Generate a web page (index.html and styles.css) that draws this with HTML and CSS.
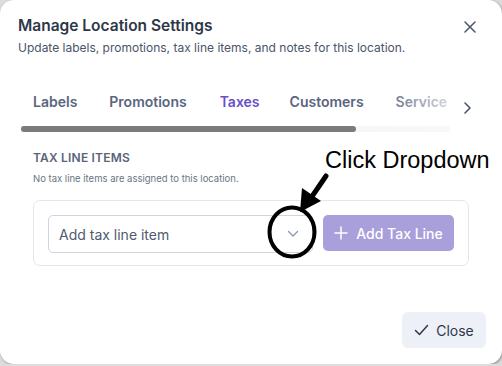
FILE: index.html
```html
<!DOCTYPE html>
<html lang="en">
<head>
    <meta charset="UTF-8">
    <meta name="viewport" content="width=device-width, initial-scale=1.0">
    <title>Manage Location Settings</title>
    <link rel="stylesheet" href="styles.css">
</head>
<body>
    <div class="modal">
        <div class="modal-header">
            <div>
                <h2>Manage Location Settings</h2>
                <p class="subtitle">Update labels, promotions, tax line items, and notes for this location.</p>
            </div>
            <button class="icon-btn close-x" aria-label="Close">
                <svg width="14" height="14" viewBox="0 0 14 14"><path d="M2 2 L12 12 M12 2 L2 12" stroke="#4a5568" stroke-width="1.5" stroke-linecap="round"/></svg>
            </button>
        </div>

        <div class="tabs-row">
            <div class="tabs-scroll">
                <div class="tabs">
                    <button class="tab">Labels</button>
                    <button class="tab">Promotions</button>
                    <button class="tab active">Taxes</button>
                    <button class="tab">Customers</button>
                    <button class="tab">Service</button>
                </div>
                <div class="fade"></div>
                <div class="scroll-track"><div class="scroll-thumb"></div></div>
            </div>
            <button class="icon-btn tab-next" aria-label="Next">
                <svg width="10" height="14" viewBox="0 0 10 14"><path d="M3 2 L8 7 L3 12" fill="none" stroke="#4a5568" stroke-width="1.6" stroke-linecap="round" stroke-linejoin="round"/></svg>
            </button>
        </div>

        <div class="panel">
            <h3>TAX LINE ITEMS</h3>
            <p class="hint">No tax line items are assigned to this location.</p>
            <div class="card">
                <div class="select">
                    <span>Add tax line item</span>
                    <svg width="12" height="8" viewBox="0 0 12 8"><path d="M1.5 1.5 L6 6 L10.5 1.5" fill="none" stroke="#8a96ab" stroke-width="1.3" stroke-linecap="round" stroke-linejoin="round"/></svg>
                </div>
                <button class="add-btn">
                    <svg width="14" height="14" viewBox="0 0 14 14"><path d="M7 1 V13 M1 7 H13" stroke="#fff" stroke-width="1.5" stroke-linecap="round"/></svg>
                    Add Tax Line
                </button>
            </div>
        </div>

        <div class="modal-footer">
            <button class="close-btn">
                <svg width="15" height="12" viewBox="0 0 15 12"><path d="M1.5 6.5 L5.5 10.5 L13.5 1.5" fill="none" stroke="#2d3748" stroke-width="1.5" stroke-linecap="round" stroke-linejoin="round"/></svg>
                Close
            </button>
        </div>

        <div class="annotation">
            <span class="note">Click Dropdown</span>
            <svg class="marker" width="502" height="366" viewBox="0 0 502 366">
                <line x1="326" y1="176" x2="313" y2="195" stroke="#000" stroke-width="5" stroke-linecap="round"/>
                <polygon points="300,212 302,188 321,201" fill="#000"/>
                <ellipse cx="292" cy="232" rx="22.5" ry="24.5" fill="none" stroke="#000" stroke-width="4"/>
            </svg>
        </div>
    </div>
</body>
</html>
```

FILE: styles.css
```css
* {
    box-sizing: border-box;
}
body {
    margin: 0;
    background: #dcdcdc;
    font-family: Inter, "Noto Sans", sans-serif;
}
button {
    font-family: inherit;
    border: none;
    background: none;
    cursor: pointer;
    padding: 0;
}
.modal {
    position: relative;
    width: 502px;
    height: 364px;
    background: #fff;
    border-radius: 14px;
    box-shadow: 1px 1px 3px rgba(0, 0, 0, 0.35);
    display: flex;
    flex-direction: column;
}
.modal-header {
    display: flex;
    justify-content: space-between;
    padding: 15px 22px 0 18px;
}
.modal-header h2 {
    margin: 0;
    font-size: 15.5px;
    font-weight: 600;
    color: #2d3748;
    line-height: 22px;
}
.subtitle {
    margin: 3px 0 0;
    font-size: 12px;
    color: #4a5568;
    line-height: 16px;
}
.close-x {
    width: 20px;
    height: 20px;
    display: flex;
    align-items: center;
    justify-content: center;
    margin-top: 2px;
}
.tabs-row {
    display: flex;
    align-items: flex-start;
    padding: 35px 0 0 21px;
}
.tabs-scroll {
    position: relative;
    width: 429px;
    overflow: hidden;
}
.tabs {
    display: flex;
    white-space: nowrap;
}
.tab {
    padding: 0 12px;
    height: 20px;
    font-size: 14px;
    font-weight: 600;
    color: #5a6580;
    flex-shrink: 0;
}
.tab:nth-child(2) {
    margin-left: 8px;
}
.tab:nth-child(3) {
    margin-left: 9px;
}
.tab:nth-child(4) {
    margin-left: 6px;
}
.tab:nth-child(5) {
    margin-left: 8px;
}
.tab.active {
    color: #6a4fca;
}
.fade {
    position: absolute;
    top: 0;
    right: 0;
    width: 70px;
    height: 20px;
    background: linear-gradient(to right, rgba(255, 255, 255, 0), rgba(255, 255, 255, 0.75));
}
.scroll-track {
    margin-top: 15px;
    height: 6px;
    background: linear-gradient(to right, #f0f0f0, #f8f8f8);
}
.scroll-thumb {
    width: 335px;
    height: 6px;
    border-radius: 3px;
    background: #7b7b7b;
}
.tab-next {
    margin: 10px 0 0 10px;
    width: 14px;
    height: 14px;
    display: flex;
    align-items: center;
    justify-content: center;
}
.panel {
    padding: 18px 33px 0;
}
.panel h3 {
    margin: 0;
    font-size: 12px;
    font-weight: 600;
    letter-spacing: 0.2px;
    color: #5a6478;
    line-height: 16px;
}
.hint {
    margin: 6px 0 0;
    font-size: 9.5px;
    color: #6b7385;
    line-height: 13px;
}
.card {
    margin-top: 15px;
    border: 1px solid #e2e6ee;
    border-radius: 7px;
    padding: 14px 14px 12px;
    display: flex;
    align-items: flex-start;
    gap: 10px;
}
.select {
    width: 265px;
    height: 38px;
    border: 1px solid #cfd6e2;
    border-radius: 5px;
    display: flex;
    align-items: center;
    justify-content: space-between;
    padding: 0 13px 0 10px;
    font-size: 14px;
    color: #4f5a70;
}
.add-btn {
    width: 131px;
    height: 36px;
    border-radius: 5px;
    background: #a99fdb;
    color: #fff;
    font-size: 14px;
    font-weight: 500;
    display: flex;
    align-items: center;
    justify-content: center;
    gap: 8px;
}
.modal-footer {
    margin-top: auto;
    display: flex;
    justify-content: flex-end;
    padding: 0 16px 16px;
}
.close-btn {
    width: 84px;
    height: 36px;
    border-radius: 6px;
    background: #edf1f7;
    color: #2d3748;
    font-size: 14px;
    font-weight: 400;
    display: flex;
    align-items: center;
    justify-content: center;
    gap: 7px;
}
.annotation {
    position: absolute;
    inset: 0;
    pointer-events: none;
}
.note {
    position: absolute;
    left: 325px;
    top: 147px;
    font-family: "Liberation Sans", Arial, sans-serif;
    font-size: 23.5px;
    color: #000;
}
.marker {
    position: absolute;
    left: 0;
    top: 0;
}
```
